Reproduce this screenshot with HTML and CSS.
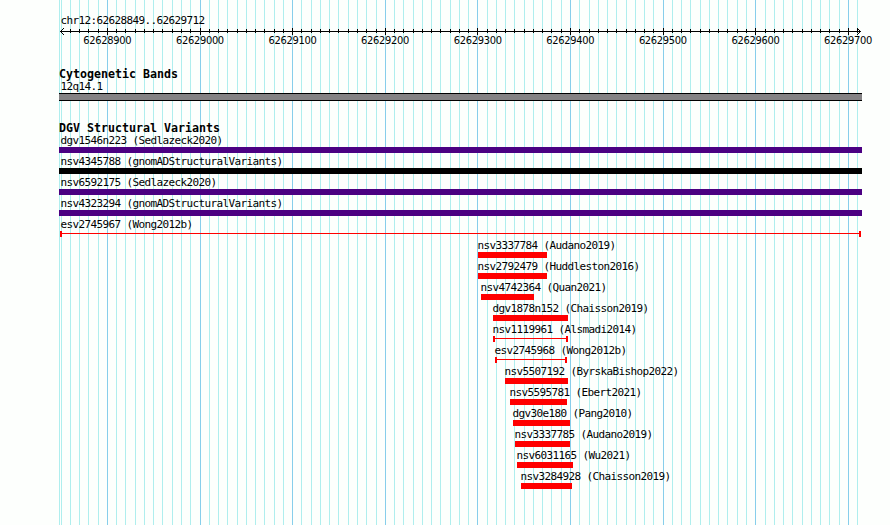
FILE: index.html
```html
<!DOCTYPE html>
<html lang="en">
<head>
<meta charset="utf-8">
<title>chr12:62628849..62629712</title>
<link rel="stylesheet" href="styles.css">
</head>
<body>
<svg class="grid" width="890" height="525" aria-hidden="true"><path id="minor" class="minor"/><path id="major" class="major"/></svg>
<main class="browser">
  <header class="region">chr12:62628849..62629712</header>
  <svg class="axis" width="802" height="7" viewBox="0 0 802 7" shape-rendering="crispEdges" aria-hidden="true">
    <path class="axis-line" d="M1 3h801v1H1z"/>
    <path id="ticks" class="axis-line"/>
    <path class="axis-line" d="M2 2h1v3H2zM3 1h1v1H3zM3 5h1v1H3zM4 0h1v1H4zM4 6h1v1H4zM800 2h1v3h-1zM799 1h1v1h-1zM799 5h1v1h-1zM798 0h1v1h-1zM798 6h1v1h-1z"/>
  </svg>
  <div class="scale"><span>62628900</span><span>62629000</span><span>62629100</span><span>62629200</span><span>62629300</span><span>62629400</span><span>62629500</span><span>62629600</span><span>62629700</span></div>
  <section class="cyto">
    <h2>Cytogenetic Bands</h2>
    <div class="label">12q14.1</div>
    <div class="band"></div>
  </section>
  <section class="variants">
    <h2>DGV Structural Variants</h2>
    <div id="features"></div>
  </section>
</main>
<script src="tracks.js"></script>
</body>
</html>
```
FILE: styles.css
```css
body {
  margin: 0;
  width: 890px;
  height: 525px;
  overflow: hidden;
  background: #fdfffd;
  color: #000;
  font-family: "DejaVu Sans Mono", "Liberation Mono", monospace;
}
.grid {
  position: absolute;
  top: 0;
  left: 0;
  z-index: -1;
  shape-rendering: crispEdges;
}
.minor { fill: #afeeee; }
.major { fill: #87ceeb; }
.browser {
  padding: 14px 0 0 59px;
}
.region, .label {
  height: 13px;
  padding-left: 1.5px;
  font-size: 11px;
  line-height: 13px;
  letter-spacing: -0.622px;
  white-space: pre;
}
.region { height: 14px; }
.axis { display: block; }
.axis-line { fill: #000; }
.scale {
  display: grid;
  grid-template-columns: repeat(9, 92.6px);
  height: 13px;
  margin-top: -1px;
  margin-left: 2px;
  font-family: "DejaVu Sans Condensed", "DejaVu Sans", sans-serif;
  font-stretch: condensed;
  font-size: 11px;
  line-height: 13px;
  letter-spacing: -0.3px;
  text-align: center;
}
h2 {
  margin: 0;
  height: 12px;
  font-size: 11.63px;
  line-height: 13px;
  font-weight: bold;
  white-space: pre;
}
.cyto { margin-top: 21px; }
.band {
  box-sizing: border-box;
  width: 803px;
  height: 8px;
  border: solid #000;
  border-width: 1px 0;
  background: #848284;
}
.variants { margin-top: 21px; }
.feature { height: 21px; }
.bar { height: 6px; background: #f00; }
.bar.gain { background: #4b0082; }
.bar.complex { background: #000; }
.bar.span {
  box-sizing: border-box;
  border: solid #f00;
  border-width: 0 2px;
  background: linear-gradient(#f00, #f00) 0 2px / 100% 1px no-repeat;
}
```
FILE: tracks.js
```javascript
const minor = [59], major = [], ticks = [];
for (let k = 0; k <= 86; k++) {
  const x = Math.floor(61.1 + 9.262 * k);
  if (k % 10 === 5) {
    major.push(x);
    ticks.push(`M${x - 59} 0h1v7h-1z`);
  } else {
    minor.push(x);
    if (k) ticks.push(`M${x - 59} 1h1v4h-1z`);
  }
}
const rules = xs => xs.map(x => `M${x} 0h1v525h-1z`).join("");
document.getElementById("minor").setAttribute("d", rules(minor));
document.getElementById("major").setAttribute("d", rules(major));
document.getElementById("ticks").setAttribute("d", ticks.join(""));

// name, left edge, right edge, bar style
const features = [
  ["dgv1546n223 (Sedlazeck2020)", 59, 862, "gain"],
  ["nsv4345788 (gnomADStructuralVariants)", 59, 862, "complex"],
  ["nsv6592175 (Sedlazeck2020)", 59, 862, "gain"],
  ["nsv4323294 (gnomADStructuralVariants)", 59, 862, "gain"],
  ["esv2745967 (Wong2012b)", 60, 861, "span"],
  ["nsv3337784 (Audano2019)", 478, 547, "loss"],
  ["nsv2792479 (Huddleston2016)", 478, 547, "loss"],
  ["nsv4742364 (Quan2021)", 481, 534, "loss"],
  ["dgv1878n152 (Chaisson2019)", 493, 568, "loss"],
  ["nsv1119961 (Alsmadi2014)", 493, 568, "span"],
  ["esv2745968 (Wong2012b)", 495, 567, "span"],
  ["nsv5507192 (ByrskaBishop2022)", 505, 568, "loss"],
  ["nsv5595781 (Ebert2021)", 510, 567, "loss"],
  ["dgv30e180 (Pang2010)", 513, 570, "loss"],
  ["nsv3337785 (Audano2019)", 515, 570, "loss"],
  ["nsv6031165 (Wu2021)", 517, 573, "loss"],
  ["nsv3284928 (Chaisson2019)", 521, 572, "loss"]
];
const list = document.getElementById("features");
for (const [name, left, right, kind] of features) {
  const row = document.createElement("div");
  row.className = "feature";
  const label = document.createElement("div");
  label.className = "label";
  label.textContent = name;
  label.style.marginLeft = `${left < 70 ? 0 : left - 61}px`;
  const bar = document.createElement("div");
  bar.className = `bar ${kind}`;
  bar.style.marginLeft = `${left - 59}px`;
  bar.style.width = `${right - left}px`;
  row.append(label, bar);
  list.append(row);
}
```
